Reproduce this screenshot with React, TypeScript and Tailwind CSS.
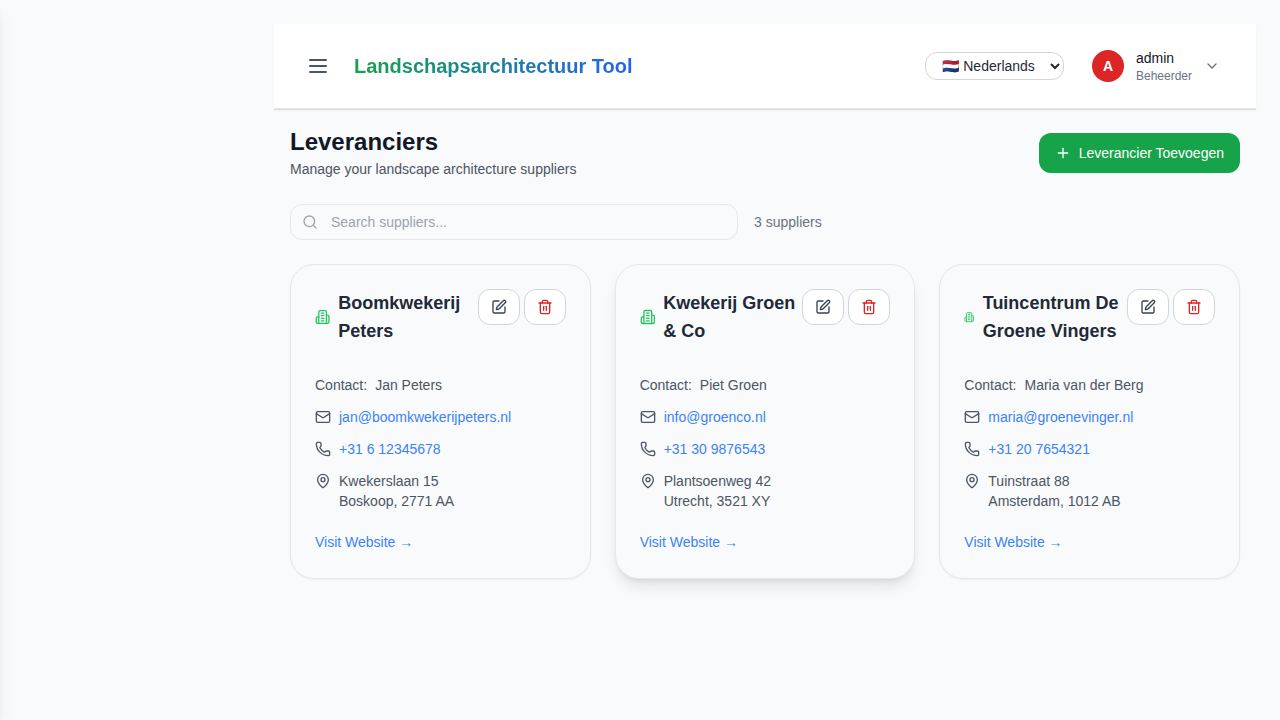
import { ChevronDown, Mail, MapPin, Phone, Plus, Search, SquarePen, Trash2 } from "lucide-react";

type Supplier = {
  name: string;
  contact: string;
  email: string;
  phone: string;
  street: string;
  city: string;
  iconClass: string;
  cardClass: string;
};

const flatShadow = "shadow-[0_1px_2px_0_rgba(0,0,0,0.05)]";
const raisedShadow = "shadow-[0_10px_15px_-3px_rgba(0,0,0,0.1),0_4px_6px_-4px_rgba(0,0,0,0.1)]";

const suppliers: Supplier[] = [
  {
    name: "Boomkwekerij Peters",
    contact: "Jan Peters",
    email: "jan@boomkwekerijpeters.nl",
    phone: "+31 6 12345678",
    street: "Kwekerslaan 15",
    city: "Boskoop, 2771 AA",
    iconClass: "w-[15.2px]",
    cardClass: flatShadow,
  },
  {
    name: "Kwekerij Groen & Co",
    contact: "Piet Groen",
    email: "info@groenco.nl",
    phone: "+31 30 9876543",
    street: "Plantsoenweg 42",
    city: "Utrecht, 3521 XY",
    iconClass: "w-[15.6px]",
    cardClass: raisedShadow,
  },
  {
    name: "Tuincentrum De Groene Vingers",
    contact: "Maria van der Berg",
    email: "maria@groenevinger.nl",
    phone: "+31 20 7654321",
    street: "Tuinstraat 88",
    city: "Amsterdam, 1012 AB",
    iconClass: "w-[10.4px]",
    cardClass: flatShadow,
  },
];

function BuildingIcon({ className }: { className: string }) {
  return (
    <svg
      viewBox="0 0 24 24"
      fill="none"
      stroke="currentColor"
      strokeWidth="2"
      strokeLinecap="round"
      strokeLinejoin="round"
      className={`mr-2 h-5 shrink-0 text-[#22c55e] ${className}`}
    >
      <path d="M6 22V4a2 2 0 0 1 2-2h8a2 2 0 0 1 2 2v18Z" />
      <path d="M6 12H4a2 2 0 0 0-2 2v6a2 2 0 0 0 2 2h2" />
      <path d="M18 9h2a2 2 0 0 1 2 2v9a2 2 0 0 1-2 2h-2" />
      <path d="M10 6h4M10 10h4M10 14h4M10 18h4" />
    </svg>
  );
}

function MenuIcon() {
  return (
    <svg viewBox="0 0 24 24" fill="none" stroke="currentColor" strokeWidth="2" strokeLinecap="round" className="size-6">
      <path d="M4 6h16M4 12h16M4 18h16" />
    </svg>
  );
}

function SupplierCard({ s }: { s: Supplier }) {
  const action = "flex h-9 w-[42px] items-center justify-center rounded-xl border border-[#d1d5db] bg-white";
  return (
    <article className={`h-[315px] rounded-3xl border border-[#e5e7eb] bg-[#f9fafb] p-6 ${s.cardClass}`}>
      <div className="flex items-start justify-between">
        <h3 className="flex min-w-0 flex-1 items-center text-lg leading-7 font-semibold text-[#1f2937]">
          <BuildingIcon className={s.iconClass} />
          <span>{s.name}</span>
        </h3>
        <div className="flex shrink-0 gap-1">
          <button className={`${action} text-[#374151]`}><SquarePen size={16} /></button>
          <button className={`${action} text-[#dc2626]`}><Trash2 size={16} /></button>
        </div>
      </div>
      <div className="mt-[30px] flex flex-col gap-3 text-sm text-[#4b5563]">
        <div className="flex gap-2"><span>Contact:</span><span>{s.contact}</span></div>
        <div className="flex items-center gap-2">
          <Mail size={16} /><a className="text-[#3b82f6]">{s.email}</a>
        </div>
        <div className="flex items-center gap-2">
          <Phone size={16} /><a className="text-[#3b82f6]">{s.phone}</a>
        </div>
        <div className="flex items-start gap-2">
          <MapPin size={16} className="mt-0.5" />
          <div><div>{s.street}</div><div>{s.city}</div></div>
        </div>
        <a className="mt-[9px] text-[#3b82f6]">Visit Website →</a>
      </div>
    </article>
  );
}

export default function App() {
  return (
    <div className="flex h-[720px] overflow-hidden bg-[#f9fafb] font-['Liberation_Sans',Arial,sans-serif] text-[#111827]">
      <aside className="-ml-64 w-64 shrink-0 shadow-[0_10px_15px_-3px_rgba(0,0,0,0.1),0_4px_6px_-4px_rgba(0,0,0,0.1)]" />
      <div className="ml-[274px] w-[982px] pt-6">
        <div className="border-b border-[#d9dbdf] shadow-[0_1px_2px_0_rgba(0,0,0,0.04)]">
          <header className="flex h-[85px] items-center justify-between border-b border-[#e5e7eb] bg-white pr-9 pl-8">
            <div className="flex items-center gap-6">
              <button className="text-[#4b5563]"><MenuIcon /></button>
              <h1 className="bg-linear-to-r from-[#16a34a] to-[#2563eb] bg-clip-text text-xl font-bold text-transparent [--tw-gradient-position:to_right]">
                Landschapsarchitectuur Tool
              </h1>
            </div>
            <div className="flex items-center">
              <select className="mr-7 h-7 w-[138.6px] rounded-xl border border-[#d1d5db] bg-white px-3 py-1 text-sm text-[#1f2937]">
                <option>🇳🇱 Nederlands</option>
              </select>
              <div className="flex size-8 items-center justify-center rounded-full bg-[#dc2626] text-sm font-semibold text-white">A</div>
              <div className="ml-3">
                <div className="text-sm leading-5">admin</div>
                <div className="text-xs leading-4 text-[#6b7280]">Beheerder</div>
              </div>
              <ChevronDown size={16} className="ml-3 text-[#6b7280]" />
            </div>
          </header>
        </div>
        <main className="px-4 pt-4">
          <div className="flex h-[54px] items-center justify-between">
            <div>
              <h2 className="text-2xl leading-8 font-bold">Leveranciers</h2>
              <p className="mt-px mb-px text-sm text-[#4b5563]">Manage your landscape architecture suppliers</p>
            </div>
            <button className="flex h-10 items-center gap-2 rounded-xl bg-[#16a34a] px-4 text-sm text-white">
              <Plus size={16} />Leverancier Toevoegen
            </button>
          </div>
          <div className="mt-6 flex items-center gap-4">
            <label className="flex h-9 w-md items-center gap-[13px] rounded-xl border border-[#e5e7eb] px-[11px] text-sm">
              <Search size={16} className="shrink-0 text-[#9ca3af]" />
              <input className="w-full bg-transparent outline-none placeholder:text-[#9ca3af]" placeholder="Search suppliers..." />
            </label>
            <span className="text-sm text-[#6b7280]">3 suppliers</span>
          </div>
          <div className="mt-6 grid grid-cols-3 gap-6">
            {suppliers.map((s) => <SupplierCard key={s.name} s={s} />)}
          </div>
        </main>
      </div>
    </div>
  );
}
